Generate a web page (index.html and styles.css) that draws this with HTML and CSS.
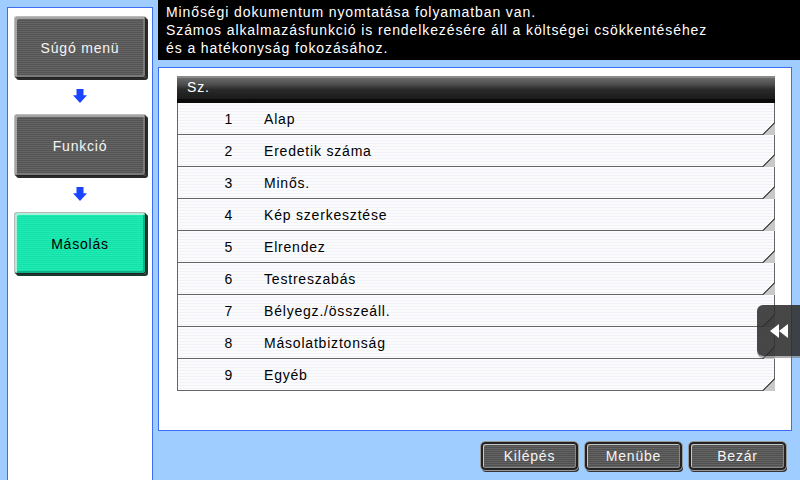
FILE: index.html
```html
<!DOCTYPE html>
<html lang="hu">
<head>
    <meta charset="UTF-8">
    <title>Súgó - Másolás</title>
    <link rel="stylesheet" href="styles.css">
</head>
<body>
    <aside class="sidebar">
        <div class="nav-btn">Súgó menü</div>
        <div class="nav-arrow"></div>
        <div class="nav-btn">Funkció</div>
        <div class="nav-arrow"></div>
        <div class="nav-btn active">Másolás</div>
    </aside>
    <div class="main">
        <header class="message">
            <p>Minőségi dokumentum nyomtatása folyamatban van.</p>
            <p>Számos alkalmazásfunkció is rendelkezésére áll a költségei csökkentéséhez</p>
            <p>és a hatékonyság fokozásához.</p>
        </header>
        <section class="panel">
            <div class="list">
                <div class="list-head">Sz.</div>
                <div class="row"><span class="num">1</span><span class="label">Alap</span></div>
                <div class="row"><span class="num">2</span><span class="label">Eredetik száma</span></div>
                <div class="row"><span class="num">3</span><span class="label">Minős.</span></div>
                <div class="row"><span class="num">4</span><span class="label">Kép szerkesztése</span></div>
                <div class="row"><span class="num">5</span><span class="label">Elrendez</span></div>
                <div class="row"><span class="num">6</span><span class="label">Testreszabás</span></div>
                <div class="row"><span class="num">7</span><span class="label">Bélyegz./összeáll.</span></div>
                <div class="row"><span class="num">8</span><span class="label">Másolatbiztonság</span></div>
                <div class="row"><span class="num">9</span><span class="label">Egyéb</span></div>
            </div>
        </section>
        <footer class="actions">
            <div class="btn">Kilépés</div>
            <div class="btn">Menübe</div>
            <div class="btn">Bezár</div>
        </footer>
    </div>
    <div class="side-tab">
        <svg width="20" height="14" viewBox="0 0 20 14">
            <polygon points="10,0 10,14 1,7" fill="#fff"/>
            <polygon points="19,0 19,14 10,7" fill="#fff"/>
        </svg>
    </div>
</body>
</html>
```

FILE: styles.css
```css
body {
    margin: 0;
    width: 800px;
    height: 480px;
    overflow: hidden;
    background: #a0cdff;
    font-family: "Liberation Sans", Arial, sans-serif;
    display: flex;
    align-items: flex-start;
    position: relative;
}

.sidebar {
    margin: 7px 0 0 7px;
    width: 144px;
    height: 464px;
    background: #fff;
    border: 1px solid #3d6cf5;
    display: flex;
    flex-direction: column;
    align-items: center;
    padding-top: 8px;
    box-sizing: content-box;
}

.nav-btn {
    width: 130px;
    height: 58px;
    display: flex;
    align-items: center;
    justify-content: center;
    color: #f4f4f4;
    font-size: 14px;
    letter-spacing: 0.8px;
    border: 1px solid #222;
    border-top-color: #bbb;
    border-left-color: #bbb;
    border-radius: 3px;
    box-shadow: inset 2px 2px 0 #a4a4a4, inset -2px -2px 0 #7a7a7a, 2px 2px 0 #2a2a2a;
    background: repeating-linear-gradient(180deg, #646464 0, #646464 1px, #545454 1px, #545454 2px);
    padding-top: 2px;
}

.nav-btn.active {
    color: #000;
    background: repeating-linear-gradient(180deg, #1eecb4 0, #1eecb4 1px, #14e0a8 1px, #14e0a8 2px);
    box-shadow: inset 2px 2px 0 #a8f0d8, inset -2px -2px 0 #10b088, 2px 2px 0 #1a3a30;
}

.nav-arrow {
    width: 14px;
    height: 14px;
    margin: 11px 0 11px;
    background: #1a44ff;
    clip-path: polygon(25% 0, 75% 0, 75% 45%, 100% 45%, 50% 100%, 0 45%, 25% 45%);
}

.main {
    margin-left: 5px;
    flex: 1;
    display: flex;
    flex-direction: column;
}

.message {
    background: #000;
    color: #fff;
    height: 60px;
    padding: 3px 0 0 8px;
    box-sizing: border-box;
    font-size: 14px;
}

.message p {
    margin: 0;
    line-height: 18px;
    letter-spacing: 0.9px;
}

.panel {
    margin-top: 7px;
    width: 634px;
    height: 364px;
    background: #fff;
    border: 1px solid #3d6cf5;
    padding: 8px 0 0 18px;
    box-sizing: border-box;
}

.list {
    width: 598px;
}

.list-head {
    height: 27px;
    box-sizing: border-box;
    border-top: 2px solid #8a8a8a;
    background: linear-gradient(180deg, #6a6a6a 0, #4e4e4e 30%, #2a2a2a 55%, #1a1a1a 100%);
    border-bottom: 4px solid #0a0a0a;
    color: #fff;
    font-size: 14px;
    letter-spacing: 0.8px;
    padding-left: 10px;
    line-height: 19px;
}

.row {
    height: 32px;
    box-sizing: border-box;
    border: 1px solid #666;
    border-top: none;
    background: repeating-linear-gradient(180deg, #fbfbfd 0, #fbfbfd 2px, #f2f3f6 2px, #f2f3f6 3px);
    display: flex;
    align-items: center;
    font-size: 14px;
    letter-spacing: 0.8px;
    color: #000;
    position: relative;
}

.row::after {
    content: "";
    position: absolute;
    right: -1px;
    bottom: -1px;
    width: 13px;
    height: 13px;
    background: linear-gradient(135deg, transparent 48%, #555 48%, #555 56%, #c8c8c8 56%);
}

.num {
    width: 55px;
    text-align: right;
    flex: none;
}

.label {
    margin-left: 31px;
}

.actions {
    display: flex;
    justify-content: flex-end;
    gap: 7px;
    margin-top: 11px;
    padding-right: 14px;
}

.btn {
    width: 93px;
    height: 24px;
    display: flex;
    align-items: center;
    justify-content: center;
    color: #f4f4f4;
    font-size: 14px;
    letter-spacing: 0.8px;
    border: 2px solid #222;
    border-radius: 4px;
    box-shadow: inset 1px 1px 0 #c8c8c8, inset -1px -1px 0 #888, 1px 2px 0 #333;
    background: repeating-linear-gradient(180deg, #646464 0, #646464 1px, #505050 1px, #505050 2px);
    outline: 1px solid #999;
}

.side-tab {
    position: absolute;
    left: 757px;
    top: 305px;
    width: 43px;
    height: 51px;
    background: rgba(45, 45, 45, 0.88);
    border-radius: 6px 0 0 6px;
    box-shadow: 0 2px 0 rgba(120, 120, 120, 0.6);
    display: flex;
    align-items: center;
    justify-content: center;
}
```
